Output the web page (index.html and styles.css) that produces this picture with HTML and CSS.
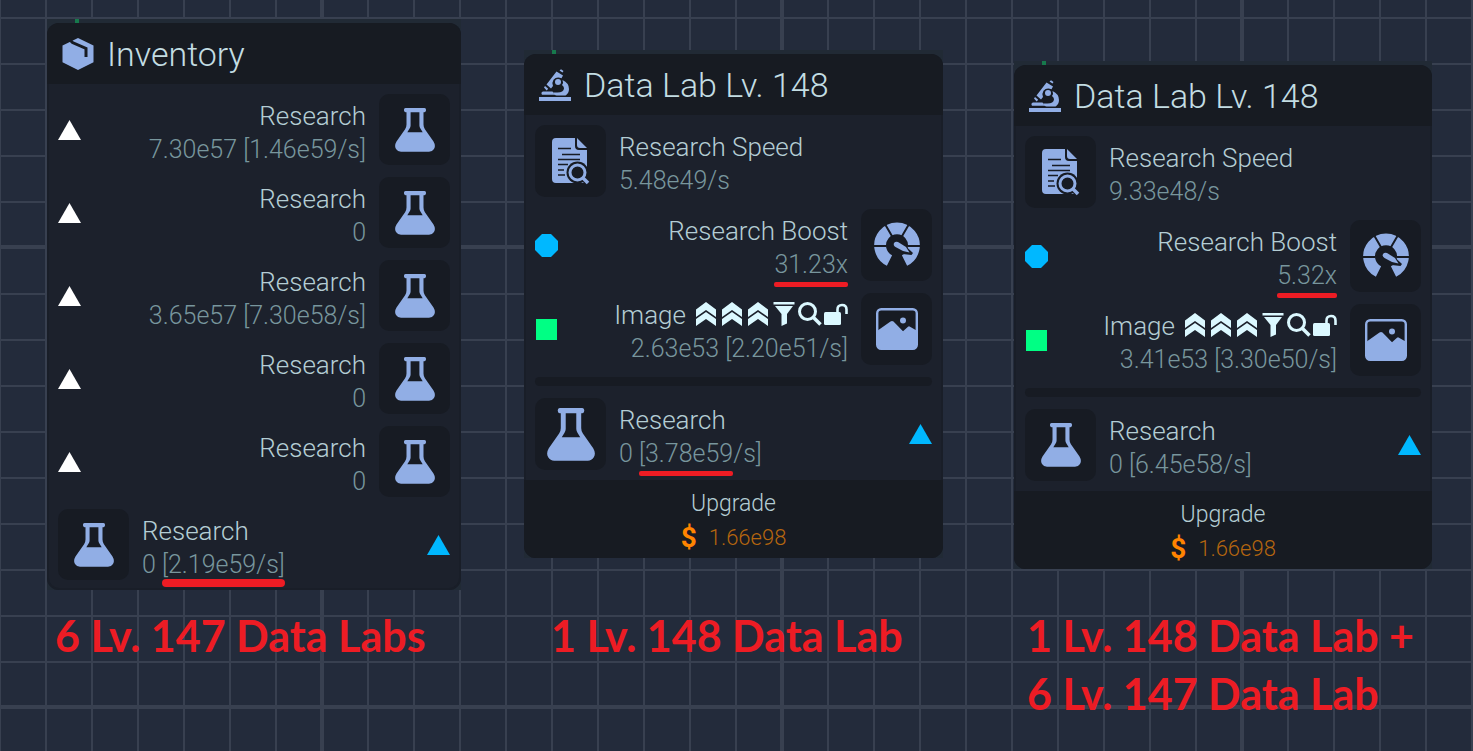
FILE: index.html
```html
<!DOCTYPE HTML>
<html lang="en">
<head>
	<meta charset="utf-8">
	<title>Data Lab comparison</title>
<meta name="viewport" content="width=device-width, initial-scale=1">
<link rel="stylesheet" href="styles.css">
</head>
<body>
<svg class="defs" aria-hidden="true">
<symbol id="flask" viewBox="0 0 40 44">
	<path fill-rule="evenodd" d="M10.5 0h19a1.5 2 0 0 1 0 4.2h-1v12.3q0 2.500 1.400 4.700l8.600 12.300q2.500 4.200.500 7.500-1.800 2.800-5 2.800H6q-3.200 0-5-2.800-2-3.300.500-7.500l8.600-12.300q1.400-2.200 1.400-4.700V4.200h-1a1.500 2 0 0 1 0-4.200zM15.600 4.200v13.300q0 1.500-1 3L12.300 24.200h15.400l-2.300-3.700q-1-1.500-1-3V4.200z"/>
</symbol>
<symbol id="box" viewBox="0 0 31 32">
	<path d="M15.500 0 31 7.500v16.800L15.500 32 0 24.300V7.500z"/>
	<path class="cut" d="M8 2.500 10 4.500 23.500 10.500v8.500" stroke-width="3"/>
</symbol>
<symbol id="microscope" viewBox="0 0 32 32">
	<path d="M0 28h32v4H0zM4 22.500h9.500q1 2 3 3.300H3q-1.500-2.200 1-3.300zM22 .300 24.500 2l-1 1.600-3-2zM6 17l3.200 2.800-1.500 1.600L5 18.500z"/>
	<path d="M17.500 2.500 24 6.500l-1.500 2.700q-5-2-8 1.500-2 3.300-.500 6.300l-2 2.500L7.500 15.500z"/>
	<circle cx="19" cy="13" r="3"/>
	<path d="M23.500 11q6.500 3 6.500 9 0 4-3.500 6.500h-9q-2.200-.500-3.500-3h4.500q6 0 6.500-4 .2-2-2-3.500 1.800-2.200.500-5z"/>
</symbol>
<symbol id="report" viewBox="0 0 38 47">
	<path d="M4 0h19v8q0 4 4 4h8v33H4q-4 0-4-4V4q0-4 4-4zM25 0l10 10h-7q-3 0-3-3z"/>
	<path class="cut" d="M6 10.500h13M10 16.500h18M6 21.500h22M6 26.500h10M6 32h6M6 37h7" stroke-width="1.600"/>
	<circle class="hole" cx="25.500" cy="34.500" r="11"/>
	<path class="cut" d="M30 39l8 8" stroke-width="6"/>
	<circle class="ring" cx="25.500" cy="34.500" r="7.500" stroke-width="3"/>
	<path class="ring" d="M30.500 39.500l5.500 5.500" stroke-width="3.600"/>
</symbol>
<symbol id="gauge" viewBox="0 0 46 46">
	<path class="ring" d="M15.500 38.500A16.900 16.900 0 1 1 30.500 38.500" stroke-width="11.800"/>
	<path class="cut" d="M0 24h12M34 24h12M11.500 3l7 12M34.500 3l-7 12" stroke-width="2"/>
	<path class="hole" d="M32 24.500 39 31l-1.500 2-9-1z"/>
	<path d="M20 21q1.500-2 4-1l8 5 3.500 5.500-6.500-1.500-7.500-4Q19 23.500 20 21z"/>
</symbol>
<symbol id="picture" viewBox="0 0 42 42">
	<rect class="ring" x="1.200" y="1.200" width="39.600" height="39.600" rx="4" stroke-width="2.400"/>
	<path d="M1 23 14.500 13.600q1.500-1 3 0l9.500 9.600 5-4.500q1-.800 2 0l7 4V37q0 4-4 4H5q-4 0-4-4z"/>
	<circle cx="27" cy="12.500" r="3"/>
</symbol>
<symbol id="chevrons" viewBox="0 0 24 24">
	<path d="M12 0 22 7.500v7.500l-10-7-10 7V7.500zM12 10l10 7v7l-10-7-10 7v-7z"/>
</symbol>
<symbol id="funnel" viewBox="0 0 24 24">
	<path d="M1.500 0h21v2.500h-21zM3 4h18l-6 8v9.500L9.500 24V12z"/>
</symbol>
<symbol id="search" viewBox="0 0 24 24">
	<circle class="ring" cx="9.500" cy="9.500" r="8" stroke-width="3"/>
	<path class="ring" d="M15.500 15.500 22.500 22.500" stroke-width="3.600"/>
</symbol>
<symbol id="unlock" viewBox="0 0 24 24">
	<rect x="0" y="10" width="17" height="13" rx="1.500"/>
	<path class="ring" d="M13.500 11V7.500Q13.500 3 18 3t4.500 4.500V12" stroke-width="2.600"/>
</symbol>
<symbol id="triangle" viewBox="0 0 23 20"><path d="M11.500 0 23 20H0z"/></symbol>
<symbol id="octagon" viewBox="0 0 23 23"><path d="M7 0h9l7 7v9l-7 7H7l-7-7V7z"/></symbol>
<symbol id="square" viewBox="0 0 23 23"><path d="M1 1h21v21H1z"/></symbol>
</svg>

<main class="board">
<section class="shot inventory">
<div class="card">
	<h2><svg class="head-icon"><use href="#box"/></svg>Inventory</h2>
	<ul class="rows">
		<li class="row input">
			<svg class="port white tri"><use href="#triangle"/></svg>
			<div class="info"><div class="label">Research</div><div class="value">7.30e57 [1.46e59/s]</div></div>
			<div class="tile"><svg class="flask"><use href="#flask"/></svg></div>
		</li>
		<li class="row input">
			<svg class="port white tri"><use href="#triangle"/></svg>
			<div class="info"><div class="label">Research</div><div class="value">0</div></div>
			<div class="tile"><svg class="flask"><use href="#flask"/></svg></div>
		</li>
		<li class="row input">
			<svg class="port white tri"><use href="#triangle"/></svg>
			<div class="info"><div class="label">Research</div><div class="value">3.65e57 [7.30e58/s]</div></div>
			<div class="tile"><svg class="flask"><use href="#flask"/></svg></div>
		</li>
		<li class="row input">
			<svg class="port white tri"><use href="#triangle"/></svg>
			<div class="info"><div class="label">Research</div><div class="value">0</div></div>
			<div class="tile"><svg class="flask"><use href="#flask"/></svg></div>
		</li>
		<li class="row input">
			<svg class="port white tri"><use href="#triangle"/></svg>
			<div class="info"><div class="label">Research</div><div class="value">0</div></div>
			<div class="tile"><svg class="flask"><use href="#flask"/></svg></div>
		</li>
		<li class="row">
			<div class="tile"><svg class="flask"><use href="#flask"/></svg></div>
			<div class="info"><div class="label">Research</div><div class="value">0 <span class="mark thick">[2.19e59/s]</span></div></div>
			<svg class="port blue tri"><use href="#triangle"/></svg>
		</li>
	</ul>
</div>
</section>

<section class="shot lab lab-one">
<div class="card">
	<h2><svg class="head-icon"><use href="#microscope"/></svg>Data Lab Lv. 148</h2>
	<ul class="rows">
		<li class="row">
			<div class="tile"><svg class="report"><use href="#report"/></svg></div>
			<div class="info"><div class="label">Research Speed</div><div class="value">5.48e49/s</div></div>
		</li>
		<li class="row input">
			<svg class="port blue"><use href="#octagon"/></svg>
			<div class="info"><div class="label">Research Boost</div><div class="value"><span class="mark">31.23x</span></div></div>
			<div class="tile"><svg class="gauge"><use href="#gauge"/></svg></div>
		</li>
		<li class="row input">
			<svg class="port green"><use href="#square"/></svg>
			<div class="info">
				<div class="label tagged">Image <span class="tags"><svg><use href="#chevrons"/></svg><svg><use href="#chevrons"/></svg><svg><use href="#chevrons"/></svg><svg><use href="#funnel"/></svg><svg><use href="#search"/></svg><svg><use href="#unlock"/></svg></span></div>
				<div class="value">2.63e53 [2.20e51/s]</div>
			</div>
			<div class="tile"><svg class="picture"><use href="#picture"/></svg></div>
		</li>
		<li class="divider"></li>
		<li class="row">
			<div class="tile"><svg class="flask big"><use href="#flask"/></svg></div>
			<div class="info"><div class="label">Research</div><div class="value">0 <span class="mark">[3.78e59</span>/s]</div></div>
			<svg class="port blue tri"><use href="#triangle"/></svg>
		</li>
	</ul>
	<button type="button" class="upgrade">Upgrade<span class="price"><b>$</b>1.66e98</span></button>
</div>
</section>

<section class="shot lab lab-two">
<div class="card">
	<h2><svg class="head-icon"><use href="#microscope"/></svg>Data Lab Lv. 148</h2>
	<ul class="rows">
		<li class="row">
			<div class="tile"><svg class="report"><use href="#report"/></svg></div>
			<div class="info"><div class="label">Research Speed</div><div class="value">9.33e48/s</div></div>
		</li>
		<li class="row input">
			<svg class="port blue"><use href="#octagon"/></svg>
			<div class="info"><div class="label">Research Boost</div><div class="value"><span class="mark">5.32x</span></div></div>
			<div class="tile"><svg class="gauge"><use href="#gauge"/></svg></div>
		</li>
		<li class="row input">
			<svg class="port green"><use href="#square"/></svg>
			<div class="info">
				<div class="label tagged">Image <span class="tags"><svg><use href="#chevrons"/></svg><svg><use href="#chevrons"/></svg><svg><use href="#chevrons"/></svg><svg><use href="#funnel"/></svg><svg><use href="#search"/></svg><svg><use href="#unlock"/></svg></span></div>
				<div class="value">3.41e53 [3.30e50/s]</div>
			</div>
			<div class="tile"><svg class="picture"><use href="#picture"/></svg></div>
		</li>
		<li class="divider"></li>
		<li class="row">
			<div class="tile"><svg class="flask"><use href="#flask"/></svg></div>
			<div class="info"><div class="label">Research</div><div class="value">0 [6.45e58/s]</div></div>
			<svg class="port blue tri"><use href="#triangle"/></svg>
		</li>
	</ul>
	<button type="button" class="upgrade">Upgrade<span class="price"><b>$</b>1.66e98</span></button>
</div>
</section>

<p class="caption">6 Lv. 147 Data Labs</p>
<p class="caption middle">1 Lv. 148 Data Lab</p>
<p class="caption last">1 Lv. 148 Data Lab +<br>6 Lv. 147 Data Lab</p>
</main>
</body>
</html>
```
FILE: styles.css
```css
*{ box-sizing:border-box; }
body{
	margin:0;
	min-height:100vh;
	font-family:Roboto,sans-serif;
	font-weight:300;
	background-color:#232b3b;
	/*every tenth grid line is thicker*/
	background-image:
		linear-gradient(90deg,#384050 4px,transparent 4px),
		linear-gradient(#384050 4px,transparent 4px),
		linear-gradient(90deg,#384050 2px,transparent 2px),
		linear-gradient(#384050 2px,transparent 2px);
	background-size:460px 460px,460px 460px,46px 46px,46px 46px;
	background-position:320px 0,0 245px,45px 0,0 17px;
}
h2,ul,p{
	margin:0;
	padding:0;
	list-style:none;
}
svg{
	display:block;
	flex:none;
	fill:currentColor;
}
.defs{
	position:absolute;
	width:0;
	height:0;
}
.cut{
	fill:none;
	stroke:#171b23;
}
.hole{ fill:#171b23; }
.ring{
	fill:none;
	stroke:currentColor;
}
.board{
	display:grid;
	grid-template-columns:477fr 490fr 459fr;
	align-items:start;
	padding-left:47px;
}
.shot{
	position:relative;
	padding-top:4px;
	background-color:#212a35;
}
.shot::before{
	content:'';
	position:absolute;
	top:0;
	left:28px;
	width:4px;
	height:4px;
	background-color:#17794c;
}
.inventory{
	margin:19px 63px 0 0;
}
.lab-one{
	margin:50px 71px 0 0;
}
.lab-two{
	margin:61px 41px 0 0;
}
.card{
	overflow:hidden;
	border-radius:12px;
	background-color:#1c212c;
	box-shadow:inset 0 0 0 2px #191e28;
}
.card h2{
	display:flex;
	align-items:center;
	gap:13px;
	height:61px;
	padding:0 15px;
	font-size:34px;
	font-weight:300;
	color:#c3dde3;
	background-color:#171b22;
}
.head-icon{
	width:32px;
	height:32px;
	color:#91aee5;
}
.rows{
	display:flex;
	flex-direction:column;
	gap:12px;
	padding:10px 11px;
}
.row{
	display:flex;
	align-items:center;
	gap:13px;
	height:71px;
}
.lab .row{ height:72px; }
.tile{
	display:flex;
	align-items:center;
	justify-content:center;
	flex:none;
	width:71px;
	height:100%;
	border-radius:10px;
	color:#91aee5;
	background-color:#171b23;
}
.flask{
	width:40px;
	height:44px;
}
.flask.big{
	width:48px;
	height:53px;
}
.report{
	width:38px;
	height:47px;
}
.gauge{
	width:46px;
	height:46px;
}
.picture{
	width:42px;
	height:42px;
}
.info{
	flex:1;
	padding-top:6px;
	line-height:34px;
	white-space:nowrap;
}
.input .info{ text-align:right; }
.label{
	font-size:26px;
	color:#b4cdd4;
}
.value{
	font-size:25px;
	color:#78969d;
}
.tagged{
	display:flex;
	justify-content:flex-end;
	gap:8px;
}
.tags{
	display:flex;
	gap:2px;
	padding-top:4px;
	color:#dbf8ff;
}
.tags svg{
	width:24px;
	height:24px;
}
.port{
	width:23px;
	height:23px;
}
.tri{ height:20px; }
.white{ color:#fff; }
.blue{ color:#00b8ff; }
.green{ color:#00ff84; }
.divider{
	height:9px;
	border-radius:5px;
	background-color:#171b23;
}
.mark{ position:relative; }
.mark::after{
	content:'';
	position:absolute;
	left:0;
	right:0;
	bottom:-8px;
	height:5px;
	border-radius:2px;
	background-color:#ed1c24;
}
.mark.thick::after{
	height:8px;
	border-radius:4px;
}
.upgrade{
	display:block;
	width:100%;
	padding:7px 0 3px;
	border:0;
	font:inherit;
	font-size:23px;
	line-height:34px;
	color:#b4cdd4;
	background-color:#171b22;
}
.price{
	display:flex;
	justify-content:center;
	gap:12px;
	font-size:22px;
	color:#b5660f;
}
.price b{
	font-size:28px;
	font-weight:700;
	color:#ff8400;
}
.caption{
	padding:17px 0 0 8px;
	font-family:Lato,sans-serif;
	font-size:43px;
	font-weight:700;
	line-height:58px;
	color:#ed1c24;
	white-space:nowrap;
}
.caption.middle{ padding-left:27px; }
.caption.last{ padding-left:13px; }
```
